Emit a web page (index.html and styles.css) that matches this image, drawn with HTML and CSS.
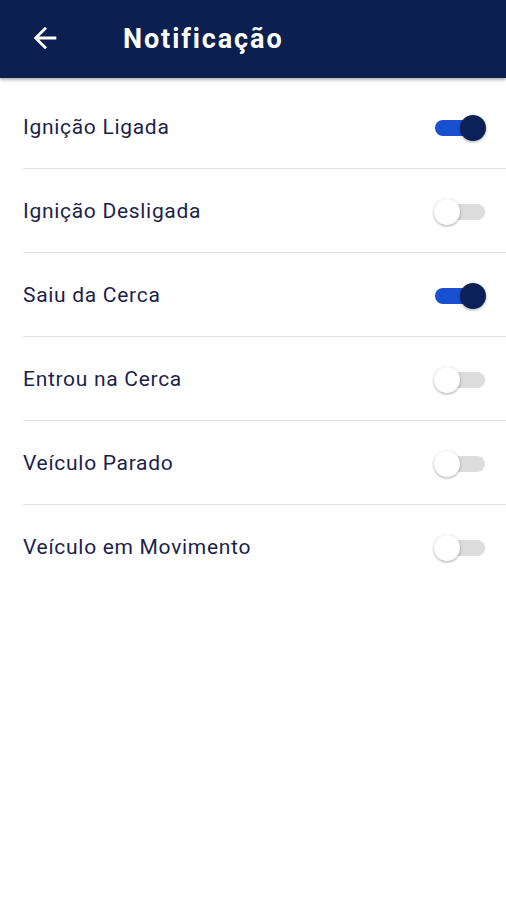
FILE: index.html
```html
<!DOCTYPE html>
<html lang="pt-BR">
<head>
    <meta charset="UTF-8">
    <meta name="viewport" content="width=device-width, initial-scale=1.0">
    <title>Notificação</title>
    <link rel="stylesheet" href="styles.css">
</head>
<body>
    <header class="app-bar">
        <button class="back-btn" aria-label="Voltar">
            <svg viewBox="0 0 24 24" width="34" height="34">
                <path d="M20 11H7.83l5.59-5.59L12 4l-8 8 8 8 1.41-1.41L7.83 13H20v-2z" fill="#fff"/>
            </svg>
        </button>
        <h1>Notificação</h1>
    </header>

    <ul class="settings">
        <li class="setting">
            <span class="label">Ignição Ligada</span>
            <span class="switch on"><span class="thumb"></span></span>
        </li>
        <li class="setting">
            <span class="label">Ignição Desligada</span>
            <span class="switch"><span class="thumb"></span></span>
        </li>
        <li class="setting">
            <span class="label">Saiu da Cerca</span>
            <span class="switch on"><span class="thumb"></span></span>
        </li>
        <li class="setting">
            <span class="label">Entrou na Cerca</span>
            <span class="switch"><span class="thumb"></span></span>
        </li>
        <li class="setting">
            <span class="label">Veículo Parado</span>
            <span class="switch"><span class="thumb"></span></span>
        </li>
        <li class="setting">
            <span class="label">Veículo em Movimento</span>
            <span class="switch"><span class="thumb"></span></span>
        </li>
    </ul>
</body>
</html>
```

FILE: styles.css
```css
body {
    margin: 0;
    padding: 0;
    font-family: Roboto, "Noto Sans", Arial, sans-serif;
    background: #fff;
    color: #1c1f4a;
}

.app-bar {
    height: 78px;
    background: #0b1f50;
    display: flex;
    align-items: center;
    box-shadow: 0 2px 3px rgba(0,0,0,0.3);
    position: relative;
}

.back-btn {
    background: none;
    border: none;
    padding: 0;
    margin-left: 28px;
    width: 34px;
    height: 34px;
    display: flex;
    align-items: center;
    justify-content: center;
    margin-top: -2px;
}

.app-bar h1 {
    margin: 0 0 0 61px;
    color: #fff;
    font-size: 27px;
    font-weight: 700;
    letter-spacing: 1.9px;
    margin-top: -1px;
}

.settings {
    list-style: none;
    margin: 0;
    padding: 7px 0 0 23px;
}

.setting {
    height: 83px;
    display: flex;
    align-items: center;
    justify-content: space-between;
    padding-right: 21px;
    border-bottom: 1.5px solid #e2e2e2;
}

.setting:last-child {
    border-bottom: none;
}

.label {
    font-size: 21px;
    letter-spacing: 0.7px;
}

.switch {
    position: relative;
    width: 50px;
    height: 16px;
    border-radius: 8px;
    background: #dcdcdc;
    margin-top: 2px;
}

.switch .thumb {
    position: absolute;
    top: -5px;
    left: -1px;
    width: 26px;
    height: 26px;
    border-radius: 50%;
    background: #fff;
    box-shadow: 0 1px 3px rgba(0,0,0,0.35);
}

.switch.on {
    background: #1a4fcf;
}

.switch.on .thumb {
    left: auto;
    right: -1px;
    background: #0c2157;
}
```
